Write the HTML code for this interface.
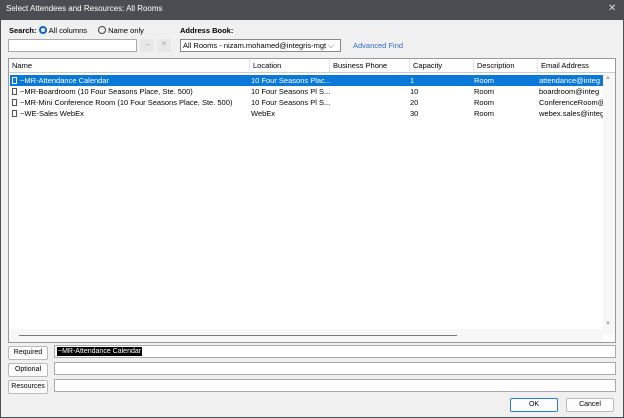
<!DOCTYPE html>
<html><head><style>
*{margin:0;padding:0;box-sizing:border-box}
body{width:624px;height:418px;background:#4a4e52;font-family:"Liberation Sans",Arial,sans-serif;font-size:7.5px;color:#000;position:relative;overflow:hidden}
.a{position:absolute;white-space:nowrap}
#title{left:6px;top:4px;color:#fff;font-size:8px}
#x{left:608px;top:3px;color:#ddd;font-size:10px}
#body{left:1px;top:20px;width:622px;height:397px;background:#f0f0f0}
.box{position:absolute;background:#fff;border:1px solid #aaa}
.btn{position:absolute;background:#fdfdfd;border:1px solid #bbb;border-radius:2px;text-align:center;font-size:7px;line-height:12px}
.hd{position:absolute;top:0;height:13px;line-height:13px;border-right:1px solid #e3e3e3;padding-left:3px}
.row{position:absolute;left:1px;width:592px;height:11px;line-height:11px}
.row span{position:absolute}
.ic{display:inline-block;width:5px;height:7px;border:1px solid #555;vertical-align:-1px;margin-right:3px;background:#fff}
</style></head><body>
<div class="a" id="title">Select Attendees and Resources: All Rooms</div>
<div class="a" id="x">✕</div>
<div class="a" id="body"></div>
<div class="a" style="left:9px;top:26px;font-weight:bold">Search:</div>
<div class="a" style="left:39px;top:26px"><span style="display:inline-block;width:8px;height:8px;border-radius:50%;border:2.5px solid #0a64c8;vertical-align:-1px"></span> All columns</div>
<div class="a" style="left:98px;top:26px"><span style="display:inline-block;width:8px;height:8px;border-radius:50%;border:1px solid #444;vertical-align:-1px"></span> Name only</div>
<div class="a" style="left:180px;top:26px;font-weight:bold">Address Book:</div>
<div class="box" style="left:8px;top:39px;width:129px;height:13px"></div>
<div class="btn" style="left:140px;top:39px;width:14px;height:13px;color:#888;border:none;background:#e8e8e8">→</div>
<div class="btn" style="left:157px;top:39px;width:14px;height:13px;color:#aaa;border:none;background:#e8e8e8">✕</div>
<div class="box" style="left:180px;top:39px;width:161px;height:13px;line-height:11px;padding-left:2px;border-color:#888">All Rooms - nizam.mohamed@integris-mgt <span style="color:#666">⌵</span></div>
<div class="a" style="left:353px;top:41px;color:#2a6fcc">Advanced Find</div>
<div class="box" style="left:8px;top:58px;width:608px;height:285px;border-color:#999">
 <div class="hd" style="left:0;width:241px">Name</div>
 <div class="hd" style="left:241px;width:80px">Location</div>
 <div class="hd" style="left:321px;width:80px">Business Phone</div>
 <div class="hd" style="left:401px;width:64px">Capacity</div>
 <div class="hd" style="left:465px;width:64px">Description</div>
 <div class="hd" style="left:529px;width:77px;border:none">Email Address</div>
 <div style="position:absolute;left:0;top:13px;width:606px;height:1px;background:#ccc"></div>
 <div class="row" style="top:16px;background:#0a78d7;color:#fff;width:593px"><span style="left:2px"><i class="ic" style="border-color:#fff;background:#0a78d7"></i>~MR-Attendance Calendar</span><span style="left:241px">10 Four Seasons Plac...</span><span style="left:400px">1</span><span style="left:464px">Room</span><span style="left:529px">attendance@integ</span></div>
 <div class="row" style="top:27px"><span style="left:2px"><i class="ic"></i>~MR-Boardroom (10 Four Seasons Place, Ste. 500)</span><span style="left:241px">10 Four Seasons Pl S...</span><span style="left:400px">10</span><span style="left:464px">Room</span><span style="left:529px">boardroom@integ</span></div>
 <div class="row" style="top:38px"><span style="left:2px"><i class="ic"></i>~MR-Mini Conference Room (10 Four Seasons Place, Ste. 500)</span><span style="left:241px">10 Four Seasons Pl S...</span><span style="left:400px">20</span><span style="left:464px">Room</span><span style="left:529px">ConferenceRoom@</span></div>
 <div class="row" style="top:49px"><span style="left:2px"><i class="ic"></i>~WE-Sales WebEx</span><span style="left:241px">WebEx</span><span style="left:400px">30</span><span style="left:464px">Room</span><span style="left:529px">webex.sales@integ</span></div>
 <div style="position:absolute;left:594px;top:14px;width:12px;height:262px;background:#f7f7f7"></div>
 <div class="a" style="left:596px;top:16px;color:#aaa;font-size:6px">▲</div>
 <div class="a" style="left:596px;top:262px;color:#aaa;font-size:6px">▼</div>
 <div style="position:absolute;left:0;top:270px;width:594px;height:13px;background:#f7f7f7"></div>
 <div style="position:absolute;left:10px;top:276px;width:438px;height:1px;background:#777"></div>
</div>
<div class="btn" style="left:8px;top:346px;width:40px;height:14px">Required</div>
<div class="btn" style="left:8px;top:363px;width:40px;height:14px">Optional</div>
<div class="btn" style="left:8px;top:380px;width:40px;height:14px">Resources</div>
<div class="box" style="left:54px;top:345px;width:562px;height:13px"><span style="position:absolute;left:2px;top:1px;background:#000;color:#fff;font-size:7px;line-height:9px;padding:0 1px">~MR-Attendance Calendar</span></div>
<div class="box" style="left:54px;top:362px;width:562px;height:13px"></div>
<div class="box" style="left:54px;top:379px;width:562px;height:13px"></div>
<div class="btn" style="left:510px;top:398px;width:48px;height:14px;border:1.5px solid #2a7bd4">OK</div>
<div class="btn" style="left:566px;top:398px;width:48px;height:14px">Cancel</div>
</body></html>
